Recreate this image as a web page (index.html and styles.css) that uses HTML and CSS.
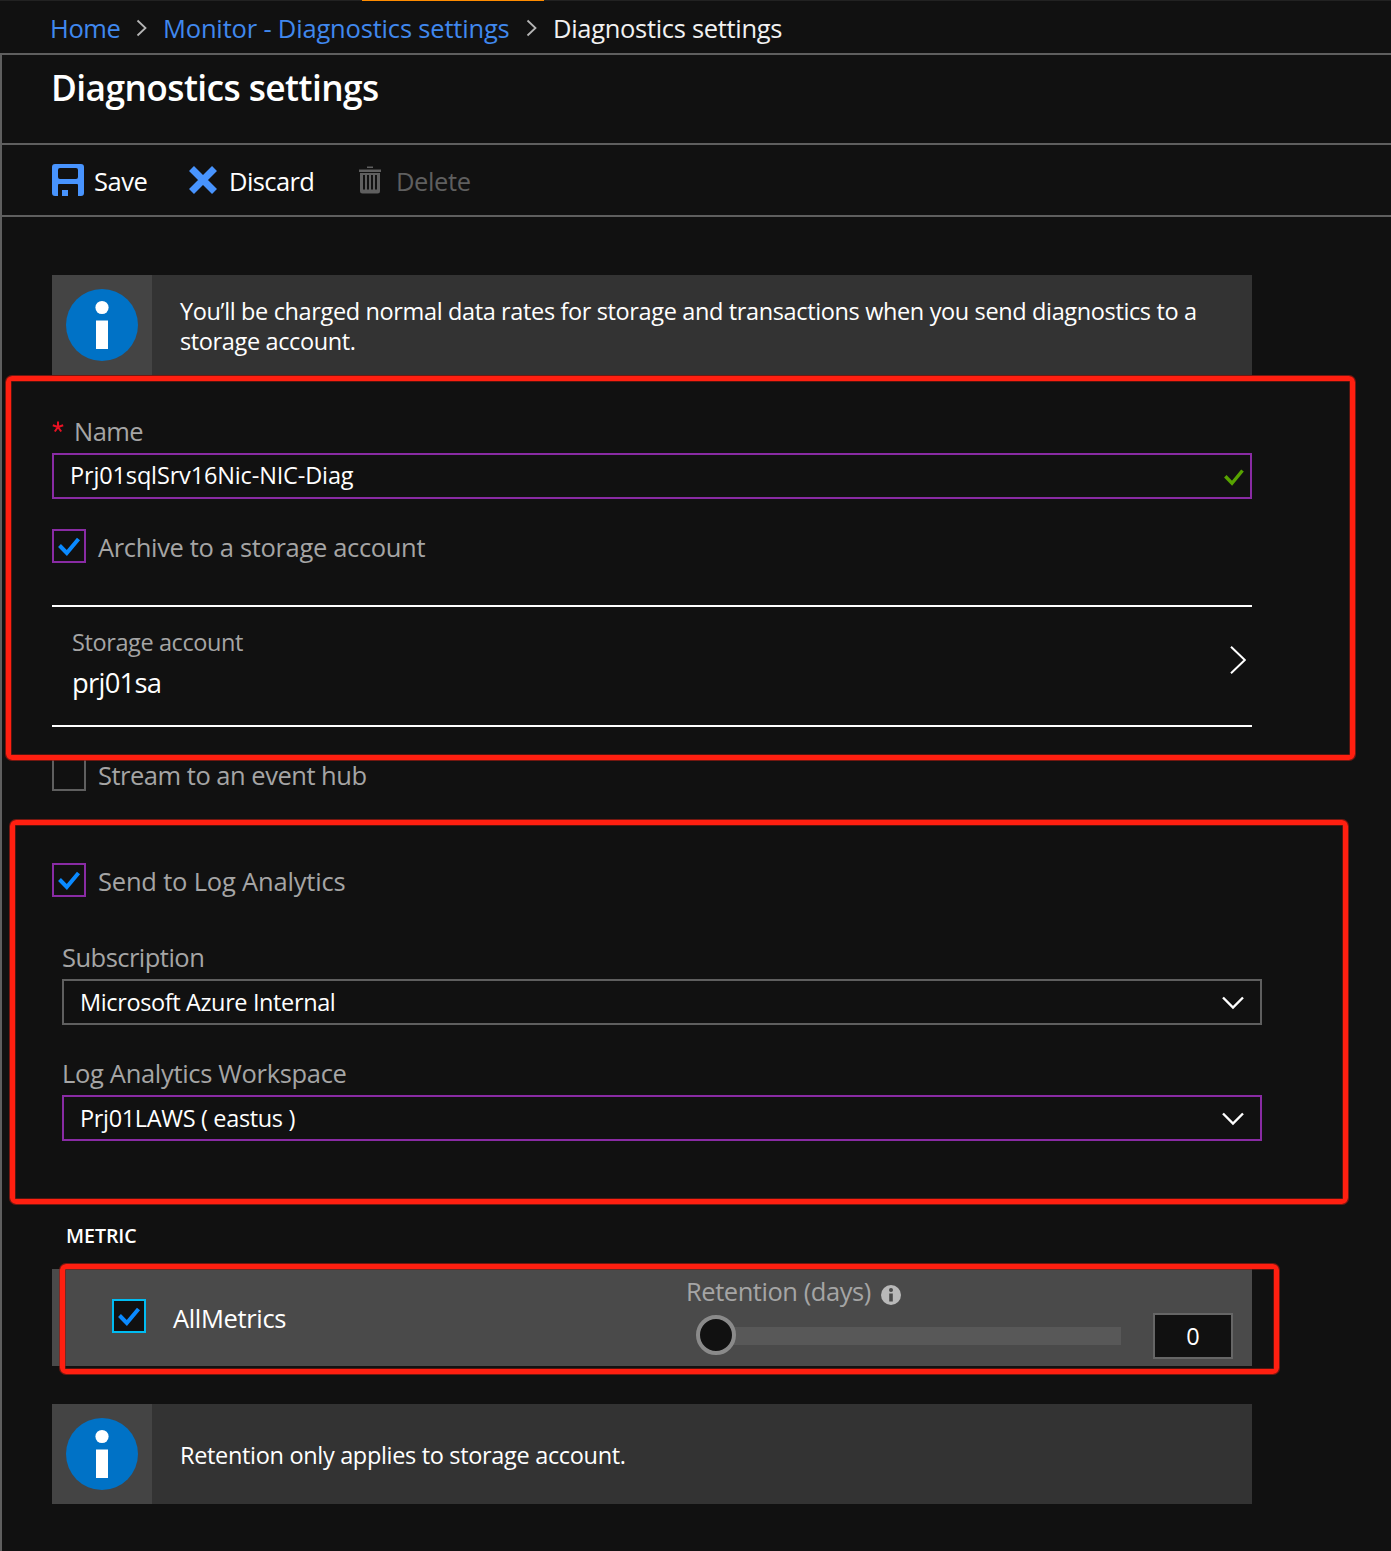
FILE: index.html
```html
<!DOCTYPE html>
<html lang="en">
<head>
<meta charset="utf-8">
<title>Diagnostics settings</title>
<link rel="stylesheet" href="styles.css">
</head>
<body>
<nav class="breadcrumb">
  <span class="tab-accent"></span>
  <a class="crumb crumb-home">Home</a>
  <svg class="crumb-sep" width="11" height="18" viewBox="0 0 11 18"><path d="M1.5 1.5 L9.5 9 L1.5 16.5"/></svg>
  <a class="crumb crumb-monitor">Monitor - Diagnostics settings</a>
  <svg class="crumb-sep" width="11" height="18" viewBox="0 0 11 18"><path d="M1.5 1.5 L9.5 9 L1.5 16.5"/></svg>
  <span class="crumb crumb-current">Diagnostics settings</span>
</nav>

<main class="blade">
  <header class="blade-header"><h1 class="blade-title">Diagnostics settings</h1></header>

  <div class="toolbar">
    <div class="command command-save">
      <svg width="32" height="32" viewBox="0 0 32 32"><path fill="#4894fe" fill-rule="evenodd" d="M3 0H29Q32 0 32 3V29Q32 32 29 32H26V21Q26 20 25 20H7Q6 20 6 21V32H3Q0 32 0 29V3Q0 0 3 0ZM8 4Q6 4 6 6V13Q6 15 8 15H24Q26 15 26 13V6Q26 4 24 4ZM10 26H16V32H10Z"/></svg>
      <span class="command-text">Save</span>
    </div>
    <div class="command command-discard">
      <svg width="28" height="28" viewBox="0 0 28 28"><path d="M2.5 2.5L25.5 25.5M25.5 2.5L2.5 25.5" stroke="#4894fe" stroke-width="7"/></svg>
      <span class="command-text">Discard</span>
    </div>
    <div class="command command-delete">
      <svg width="22" height="28" viewBox="0 0 22 28"><path fill="#5f5f5f" fill-rule="evenodd" d="M8 .6H14V2H8ZM0 3.500H22V6H0ZM1 7H21V25Q21 27.500 18.500 27.500H3.500Q1 27.500 1 25ZM4 9V23.500H6V9ZM8 9V23.500H10V9ZM12 9V23.500H14V9ZM16 9V23.500H18V9Z"/></svg>
      <span class="command-text">Delete</span>
    </div>
  </div>

  <div class="content">
    <section class="alert">
      <div class="alert-icon"><svg width="72" height="72" viewBox="0 0 72 72"><circle cx="36" cy="36" r="36" fill="#0072c6"/><circle cx="36" cy="18.500" r="6.600" fill="#fff"/><path d="M30 31.500H42V60H30Z" fill="#fff"/></svg></div>
      <p class="alert-text alert-long">You’ll be charged normal data rates for storage and transactions when you send diagnostics to a<br>storage account.</p>
    </section>

    <label class="label name-label"><svg class="required" width="12" height="12" viewBox="0 0 12 12"><path d="M6 6V.5M6 6L.8 4.300M6 6L11.200 4.300M6 6L2.800 10.500M6 6L9.200 10.500"/></svg><span>Name</span></label>
    <div class="field field-changed name-field">
      <span>Prj01sqlSrv16Nic-NIC-Diag</span>
      <svg class="valid" width="20" height="17" viewBox="0 0 20 17"><path d="M1.300 7.300L8 14.300L18.500 1.500" stroke="#57a300" stroke-width="3.400"/></svg>
    </div>

    <div class="check-row archive-row">
      <span class="checkbox changed"><svg width="30" height="30" viewBox="2 2 30 30"><path d="M7.500 16.500L14.800 24L26.500 10"/></svg></span>
      <span class="check-text">Archive to a storage account</span>
    </div>

    <div class="selector">
      <div class="selector-body">
        <div class="selector-label">Storage account</div>
        <div class="selector-value">prj01sa</div>
      </div>
      <svg width="16" height="28" viewBox="0 0 16 28"><path d="M1 .8L14.800 14L1 27.200" stroke="#fff" stroke-width="2"/></svg>
    </div>

    <div class="check-row stream-row">
      <span class="checkbox"></span>
      <span class="check-text">Stream to an event hub</span>
    </div>
    <div class="check-row send-row">
      <span class="checkbox changed"><svg width="30" height="30" viewBox="2 2 30 30"><path d="M7.500 16.500L14.800 24L26.500 10"/></svg></span>
      <span class="check-text">Send to Log Analytics</span>
    </div>

    <div class="analytics">
      <label class="label subscription-label">Subscription</label>
      <div class="field">
        <span class="subscription-value">Microsoft Azure Internal</span>
        <svg class="caret" width="22" height="14" viewBox="0 0 22 14"><path d="M1 1.500L11 11.500L21 1.500" stroke="#fff" stroke-width="2.400"/></svg>
      </div>
      <label class="label workspace-label">Log Analytics Workspace</label>
      <div class="field field-changed">
        <span class="workspace-value">Prj01LAWS ( eastus )</span>
        <svg class="caret" width="22" height="14" viewBox="0 0 22 14"><path d="M1 1.500L11 11.500L21 1.500" stroke="#fff" stroke-width="2.400"/></svg>
      </div>
    </div>

    <h2 class="metric-heading">METRIC</h2>
    <section class="metric-row">
      <span class="checkbox focused"><svg width="30" height="30" viewBox="2 2 30 30"><path d="M7.500 16.500L14.800 24L26.500 10"/></svg></span>
      <span class="metric-name">AllMetrics</span>
      <div class="retention">
        <div class="retention-label">
          <span>Retention (days)</span>
          <svg width="20" height="20" viewBox="0 0 20 20"><circle cx="10" cy="10" r="10" fill="#b9b9b9"/><circle cx="10" cy="5" r="2" fill="#4a4a4a"/><path d="M8.200 8.500H11.800V16.500H8.200Z" fill="#4a4a4a"/></svg>
        </div>
        <div class="slider-row">
          <span class="thumb"></span>
          <span class="track"></span>
          <span class="days">0</span>
        </div>
      </div>
    </section>

    <section class="alert alert-retention">
      <div class="alert-icon"><svg width="72" height="72" viewBox="0 0 72 72"><circle cx="36" cy="36" r="36" fill="#0072c6"/><circle cx="36" cy="18.500" r="6.600" fill="#fff"/><path d="M30 31.500H42V60H30Z" fill="#fff"/></svg></div>
      <p class="alert-text alert-short">Retention only applies to storage account.</p>
    </section>
  </div>
</main>

<div class="highlight highlight-storage"></div>
<div class="highlight highlight-analytics"></div>
<div class="highlight highlight-metric"></div>
</body>
</html>
```
FILE: styles.css
```css
* { box-sizing: border-box; }

body {
  margin: 0;
  height: 1551px;
  position: relative;
  overflow: hidden;
  background: #111;
  color: #fff;
  font-family: "Open Sans", "Noto Sans", sans-serif;
  font-size: 25.5px;
  line-height: 36px;
  white-space: nowrap;
}

svg { display: block; flex: none; fill: none; }
h1, h2, p { margin: 0; font-weight: 400; }

/* Breadcrumb */
.breadcrumb {
  position: relative;
  display: flex;
  align-items: center;
  height: 55px;
  padding: 1px 0 0 50px;
  border-top: 1px solid #222;
  border-bottom: 2px solid #5f5f5f;
}
.tab-accent {
  position: absolute;
  top: -1px;
  left: 362px;
  width: 182px;
  height: 1px;
  background: #ff8c00;
}
.crumb { color: #4088ee; }
.crumb-home { width: 86px; letter-spacing: -0.4px; }
.crumb-monitor { width: 363px; margin-left: 16px; letter-spacing: -0.18px; }
.crumb-current { margin-left: 16px; color: #f2f2f2; letter-spacing: -0.31px; }
.crumb-sep { stroke: #b5b5b5; stroke-width: 1.8; }

/* Blade */
.blade { height: 1496px; border-left: 2px solid #5f5f5f; }
.blade-header {
  height: 90px;
  padding: 10px 0 0 49px;
  border-bottom: 2px solid #5f5f5f;
}
.blade-title {
  font-size: 35.3px;
  font-weight: 600;
  line-height: 44px;
  letter-spacing: -0.57px;
}

.toolbar {
  display: flex;
  height: 72px;
  padding-left: 50px;
  border-bottom: 2px solid #5f5f5f;
}
.command { display: flex; align-items: center; }
.command-text { padding-top: 2px; }
.command-save { width: 137px; gap: 10px; letter-spacing: -0.5px; }
.command-discard { width: 170px; gap: 12px; letter-spacing: -0.6px; }
.command-delete { gap: 15px; color: #5f5f5f; letter-spacing: -0.4px; }

.content { width: 1250px; padding: 58px 0 0 50px; }

/* Information boxes */
.alert { display: flex; height: 100px; background: #333; }
.alert-icon {
  display: flex;
  align-items: center;
  justify-content: center;
  width: 100px;
  background: #444;
}
.alert-text { font-size: 23.5px; line-height: 30px; }
.alert-long { padding: 21px 0 0 28px; letter-spacing: -0.365px; }
.alert-short { padding: 36px 0 0 28px; letter-spacing: -0.325px; }
.alert-retention { margin-top: 38px; }

/* Fields */
.label { display: flex; height: 36px; color: #a5a5a5; }
.name-label { margin-top: 38px; gap: 9px; letter-spacing: -0.55px; }
.required { margin-top: 8px; stroke: #e81123; stroke-width: 2; }
.name-label span { padding-left: 1px; }
.field {
  display: flex;
  align-items: center;
  justify-content: space-between;
  height: 46px;
  margin-top: 4px;
  padding-left: 16px;
  border: 2px solid #5f5f5f;
  font-size: 23.5px;
}
.field-changed { border-color: #892ba4; }
.name-field { padding: 0 6px 2px 16px; letter-spacing: -0.144px; }
.valid { margin-top: 4px; }
.caret { margin: 1px 16px 0 0; }

.check-row { display: flex; height: 34px; gap: 12px; color: #a5a5a5; }
.checkbox {
  flex: none;
  width: 34px;
  height: 34px;
  border: 2px solid #5f5f5f;
  background: #111;
}
.checkbox path { stroke: #0a8aff; stroke-width: 4; }
.changed { border-color: #892ba4; }
.focused { border-color: #00bcf2; }
.archive-row { margin-top: 30px; letter-spacing: -0.338px; }
.stream-row { margin-top: 30px; letter-spacing: -0.49px; }
.send-row { margin-top: 72px; letter-spacing: -0.19px; }

.selector {
  display: flex;
  justify-content: space-between;
  align-items: center;
  height: 122px;
  margin-top: 42px;
  padding: 0 6px 0 20px;
  border: solid #fff;
  border-width: 2px 0;
}
.selector > svg { margin-top: -12px; }
.selector-body { align-self: flex-start; padding-top: 19px; }
.selector-label {
  color: #a5a5a5;
  font-size: 23.5px;
  line-height: 32px;
  letter-spacing: -0.4px;
}
.selector-value { margin-top: 7px; font-size: 27.4px; letter-spacing: -0.73px; }

.analytics { width: 1200px; margin: 42px 0 0 10px; }
.subscription-label { letter-spacing: -0.523px; }
.subscription-value { letter-spacing: -0.38px; }
.workspace-label { margin-top: 30px; letter-spacing: -0.32px; }
.workspace-value { letter-spacing: -0.34px; }

/* Metric list */
.metric-heading {
  margin-top: 80px;
  padding-left: 14px;
  font-size: 19.6px;
  font-weight: 600;
  line-height: 30px;
  letter-spacing: -0.05px;
}
.metric-row {
  display: flex;
  height: 97px;
  margin-top: 18px;
  padding-left: 60px;
  background: #4a4a4a;
}
.metric-row .checkbox { margin-top: 30px; }
.metric-name { width: 513px; margin: 31px 0 0 27px; letter-spacing: -0.35px; }
.retention { flex: 1; padding-top: 4px; }
.retention-label {
  display: flex;
  gap: 10px;
  color: #a5a5a5;
  letter-spacing: -0.45px;
}
.retention-label svg { margin-top: 12px; }
.slider-row {
  display: flex;
  align-items: center;
  height: 46px;
  margin-top: 4px;
  padding: 0 19px 0 10px;
}
.thumb {
  z-index: 1;
  width: 40px;
  height: 40px;
  margin: -2px -20px 0 0;
  border: 4px solid #8a8a8a;
  border-radius: 50%;
  background: #111;
}
.track { flex: 1; height: 18px; background: #585858; }
.days {
  width: 80px;
  height: 46px;
  margin-left: 32px;
  border: 2px solid #666;
  background: #111;
  font-size: 23.5px;
  line-height: 42px;
  text-align: center;
}

/* Callout frames drawn over the form */
.highlight {
  position: absolute;
  border: 5px solid #ff1f10;
  border-radius: 6px;
  box-shadow: 0 0 0 1px rgba(160, 25, 15, .7), inset 0 0 0 1px rgba(130, 25, 15, .6);
}
.highlight-storage { left: 6px; top: 376px; width: 1349px; height: 384px; }
.highlight-analytics { left: 10px; top: 820px; width: 1338px; height: 384px; }
.highlight-metric { left: 60px; top: 1264px; width: 1219px; height: 110px; }
```
